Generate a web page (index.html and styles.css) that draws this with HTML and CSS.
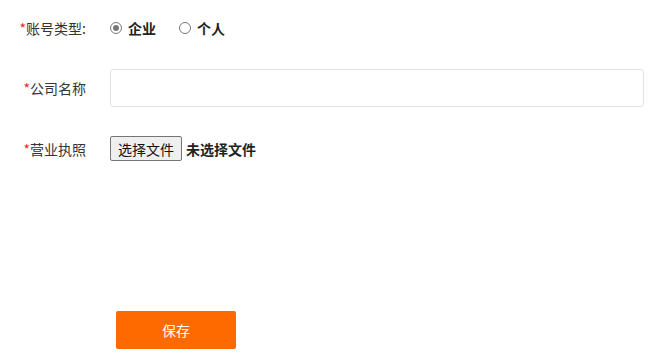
FILE: index.html
```html
<!DOCTYPE html>
<html lang="zh-CN">
<head>
<meta charset="utf-8">
<link rel="stylesheet" href="styles.css">
</head>
<body>
<form class="form">
  <div class="row row-type">
    <div class="label"><span class="req">*</span>账号类型:</div>
    <div class="field radios">
      <label class="radio"><span class="dot checked"></span><b>企业</b></label>
      <label class="radio"><span class="dot"></span><b>个人</b></label>
    </div>
  </div>
  <div class="row row-name">
    <div class="label"><span class="req">*</span>公司名称</div>
    <div class="field"><div class="input"></div></div>
  </div>
  <div class="row row-file">
    <div class="label"><span class="req">*</span>营业执照</div>
    <div class="field file">
      <span class="file-btn">选择文件</span><span class="file-name">未选择文件</span>
    </div>
  </div>
  <div class="actions">
    <span class="save">保存</span>
  </div>
</form>
</body>
</html>
```
FILE: styles.css
```css
* { box-sizing: border-box; }
html, body { margin: 0; padding: 0; background: #fff; }
body {
  width: 659px;
  height: 363px;
  overflow: hidden;
  font-family: "Noto Sans CJK SC", "Microsoft YaHei", sans-serif;
  font-size: 14px;
  color: #333;
}
.form { padding-top: 17px; }
.row {
  display: flex;
  align-items: center;
}
.label {
  width: 86px;
  text-align: right;
  flex: none;
  line-height: 22px;
}
.req { color: #f0262b; }
.field {
  margin-left: 24px;
  flex: 1;
  display: flex;
  align-items: center;
}
.row-type { height: 22px; }
.radio {
  display: flex;
  align-items: center;
  margin-right: 23px;
}
.radio b { font-weight: bold; color: #222; line-height: 22px; }
.dot {
  width: 12px;
  height: 12px;
  border: 1px solid #767676;
  border-radius: 50%;
  margin-right: 6px;
  position: relative;
  background: #fff;
}
.dot.checked { border-color: #777; }
.dot.checked::after {
  content: "";
  position: absolute;
  left: 2px; top: 2px;
  width: 6px; height: 6px;
  border-radius: 50%;
  background: #777;
}
.row-name { margin-top: 30px; }
.input {
  width: 534px;
  height: 38px;
  border: 1px solid #e2e2e2;
  border-radius: 3px;
  margin-right: 15px;
}
.row-file { margin-top: 29px; }
.file-btn {
  display: inline-flex;
  align-items: center;
  justify-content: center;
  width: 72px;
  height: 25px;
  background: #efefef;
  border: 1px solid #767676;
  border-radius: 2px;
  color: #111;
  font-size: 14px;
}
.file-name {
  margin-left: 4px;
  font-weight: bold;
  color: #222;
}
.actions {
  margin-top: 150px;
  padding-left: 116px;
}
.save {
  display: inline-flex;
  align-items: center;
  justify-content: center;
  width: 120px;
  height: 38px;
  background: #ff6a00;
  color: #fff;
  border-radius: 2px;
  font-size: 14px;
}
```
